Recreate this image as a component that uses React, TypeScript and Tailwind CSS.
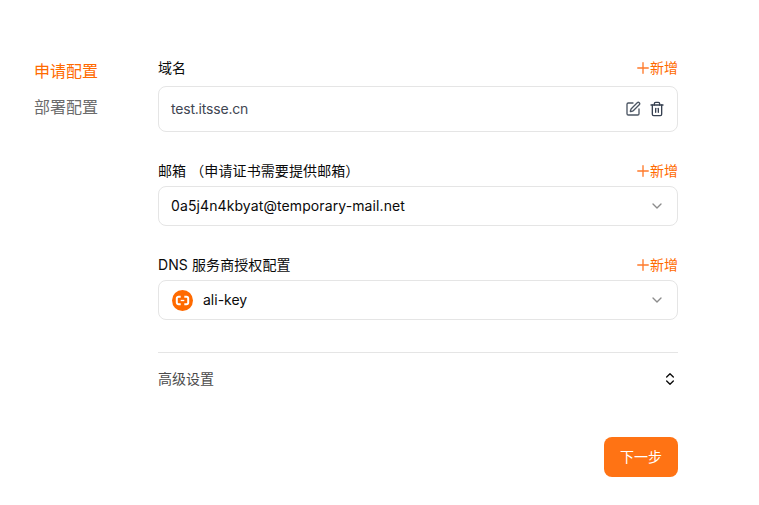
import React from 'react';
import { ChevronDown, ChevronsUpDown, Plus, SquarePen, Trash2 } from 'lucide-react';

const font = 'font-["Inter","Noto_Sans_CJK_SC",sans-serif]';

const FieldLabel: React.FC<{ label: React.ReactNode }> = ({ label }) => (
  <div className="flex items-center justify-between h-5 text-sm text-[#0a0a0a]">
    <span className="tracking-[0.1px]">{label}</span>
    <button className="flex items-center text-[#ff6a00]">
      <Plus className="w-[18px] h-[18px] text-[#ff7a2a]" strokeWidth={1.8} />
      <span className="-ml-[2px]">新增</span>
    </button>
  </div>
);

const AliIcon = () => (
  <svg viewBox="0 0 21 21" className="w-[21px] h-[21px] shrink-0">
    <circle cx="10.5" cy="10.5" r="10.5" fill="#ff6a00" />
    <path
      d="M8.700 6.800H6.500A1.700 1.700 0 0 0 4.800 8.500v4A1.700 1.700 0 0 0 6.500 14.200h2.200M12.300 6.800h2.200a1.700 1.700 0 0 1 1.700 1.700v4a1.700 1.700 0 0 1-1.700 1.700h-2.200"
      fill="none"
      stroke="#fff"
      strokeWidth="2"
    />
    <path d="M8.700 10.500h3.600" stroke="#fff" strokeWidth="1.300" />
  </svg>
);

export default function App() {
  return (
    <div className={`${font} w-[759px] h-[505px] bg-white flex overflow-hidden`}>
      {/* side nav */}
      <nav className="w-[158px] shrink-0 pt-[53px] pl-[34px] text-base">
        <div className="h-9 leading-9 text-[#ff6a00]">申请配置</div>
        <div className="h-9 leading-9 text-[#6b6b6b]">部署配置</div>
      </nav>

      <div className="w-[520px] pt-[58px]">
        <FieldLabel label="域名" />
        <div className="mt-2 h-[46px] flex items-center justify-between px-3 border border-[#e5e5e5] rounded-lg text-sm text-[#3f4652]">
          <span className="tracking-[-0.2px]">test.itsse.cn</span>
          <div className="flex items-center gap-2">
            <SquarePen className="w-4 h-4 text-[#4b5563]" strokeWidth={2} />
            <Trash2 className="w-4 h-4 text-[#374151]" strokeWidth={2} />
          </div>
        </div>

        <div className="mt-[29px]">
          <FieldLabel label="邮箱 （申请证书需要提供邮箱）" />
        </div>
        <div className="mt-[5px] h-10 flex items-center justify-between px-3 border border-[#e5e5e5] rounded-lg text-sm text-[#0a0a0a]">
          <span className="tracking-[0.1px]">0a5j4n4kbyat@temporary-mail.net</span>
          <ChevronDown className="w-4 h-4 text-[#8c8c8c]" />
        </div>

        <div className="mt-[29px]">
          <FieldLabel label="DNS 服务商授权配置" />
        </div>
        <div className="mt-[5px] h-10 flex items-center justify-between pl-[13px] pr-3 border border-[#e5e5e5] rounded-lg text-sm text-[#0a0a0a]">
          <div className="flex items-center gap-[10px]">
            <AliIcon />
            <span>ali-key</span>
          </div>
          <ChevronDown className="w-4 h-4 text-[#8c8c8c]" />
        </div>

        <div className="mt-8 border-t border-[#e5e5e5] h-[53px] flex items-center justify-between text-sm text-[#4b4b4b]">
          <span>高级设置</span>
          <ChevronsUpDown className="w-4 h-4 text-[#0a0a0a]" strokeWidth={2} />
        </div>

        <div className="mt-8 flex justify-end">
          <button className="w-[74px] h-10 rounded-lg bg-[#ff7314] text-white text-sm">下一步</button>
        </div>
      </div>
    </div>
  );
}
